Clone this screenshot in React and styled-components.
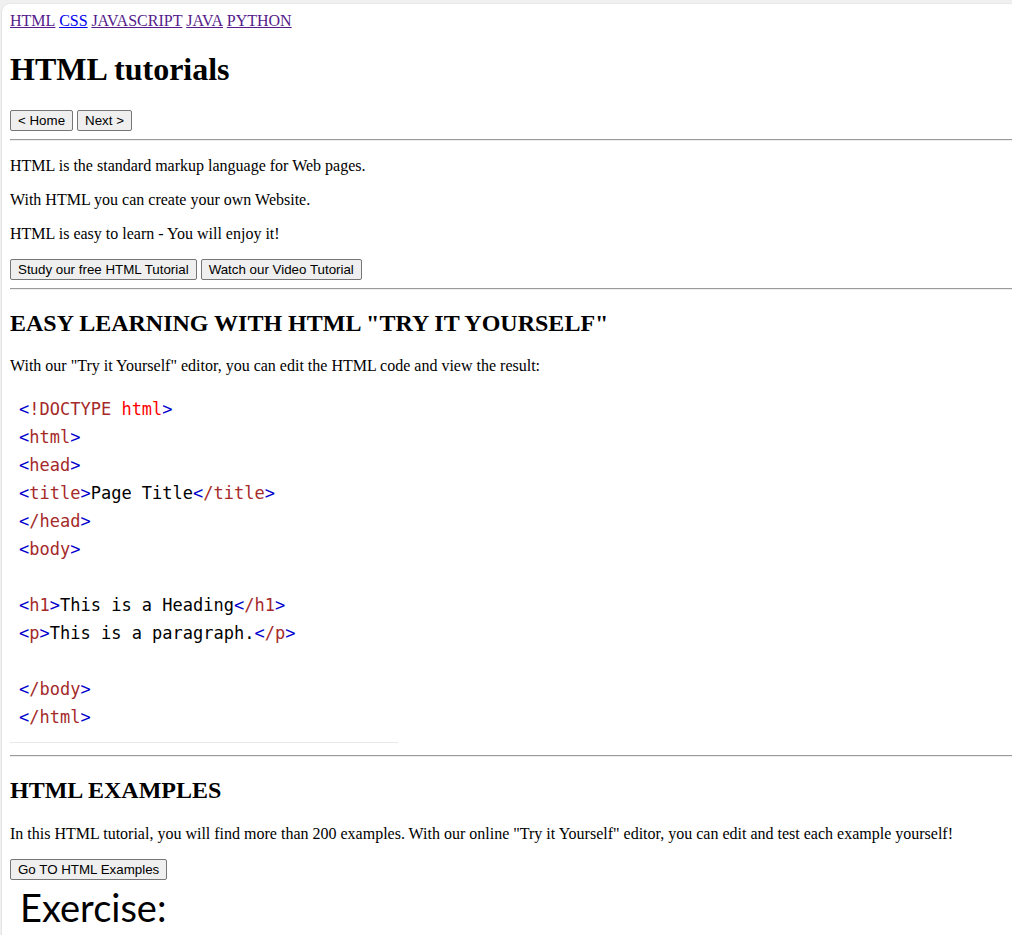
import React from "react";
import styled, { createGlobalStyle } from "styled-components";

const Global = createGlobalStyle`
  html, body { margin: 0; padding: 0; }
  body {
    background: #f0f0f0;
    font-family: "Liberation Serif", "Times New Roman", serif;
    font-size: 16px;
    color: #000;
  }
`;

const Frame = styled.div`
  margin: 4px 0 0 2px;
  min-height: calc(100vh - 4px);
  box-sizing: border-box;
  background: #fff;
  border-top-left-radius: 8px;
  box-shadow: -1px 0 0 #e4e4e4, 0 -1px 0 #e8e8e8;
  padding: 8px 0 0 8px;
  overflow: hidden;
`;

const Nav = styled.nav`
  line-height: 18px;
  display: flex;
  gap: 3.8px;
`;

const NavLink = styled.a`
  color: ${(p) => (p.$visited ? "#551a8b" : "#0000ee")};
  text-decoration: underline;
`;

const Title = styled.h1`
  font-size: 32px;
  font-weight: bold;
  margin: 21.44px 0;
  line-height: 37px;
`;

const Heading = styled.h2`
  font-size: 24px;
  font-weight: bold;
  margin: 19.92px 0;
  line-height: 27.6px;
`;

const Para = styled.p`
  margin: 16px 0;
  line-height: 18px;
`;

const ButtonRow = styled.div`
  display: flex;
  gap: 4px;
  align-items: center;
`;

const Button = styled.button`
  font-family: "Liberation Sans", Arial, sans-serif;
  font-size: 13.333px;
  height: 21px;
  padding: 0 7px;
  line-height: 19px;
  color: #000;
  background: #efefef;
  border: 1px solid #767676;
  border-radius: 2px;
  cursor: pointer;
`;

const Rule = styled.hr`
  margin: 8px 0;
  border: none;
  border-top: 1px solid #9a9a9a;
  border-bottom: 1px solid #eeeeee;
  height: 0;
`;

const CodeBox = styled.div`
  width: 388px;
  box-sizing: border-box;
  padding: 4px 0 11px 9px;
  margin-bottom: 12px;
  border-bottom: 1px solid #e8e8e8;
  font-family: "DejaVu Sans Mono", "Liberation Mono", monospace;
  font-size: 17px;
  line-height: 28px;
  white-space: pre;
`;

const CodeLine = styled.div`
  height: 28px;
`;

const Br = styled.span`
  color: #0000cd;
`;
const Tag = styled.span`
  color: #a52a2a;
`;
const Attr = styled.span`
  color: #ff0000;
`;

const Exercise = styled.div`
  font-family: Lato, "Open Sans", sans-serif;
  font-size: 38px;
  line-height: 54px;
  padding-left: 10px;
`;

const Open = ({ name }) => (
  <>
    <Br>&lt;</Br>
    <Tag>{name}</Tag>
    <Br>&gt;</Br>
  </>
);
const Close = ({ name }) => (
  <>
    <Br>&lt;</Br>
    <Tag>/{name}</Tag>
    <Br>&gt;</Br>
  </>
);

export default function App() {
  return (
    <>
      <Global />
      <Frame>
        <Nav>
          <NavLink href="#" $visited>HTML</NavLink>
          <NavLink href="#">CSS</NavLink>
          <NavLink href="#" $visited>JAVASCRIPT</NavLink>
          <NavLink href="#" $visited>JAVA</NavLink>
          <NavLink href="#" $visited>PYTHON</NavLink>
        </Nav>
        <Title>HTML tutorials</Title>
        <ButtonRow>
          <Button>&lt; Home</Button>
          <Button>Next &gt;</Button>
        </ButtonRow>
        <Rule />
        <Para>HTML is the standard markup language for Web pages.</Para>
        <Para>With HTML you can create your own Website.</Para>
        <Para>HTML is easy to learn - You will enjoy it!</Para>
        <ButtonRow>
          <Button>Study our free HTML Tutorial</Button>
          <Button>Watch our Video Tutorial</Button>
        </ButtonRow>
        <Rule />
        <Heading>EASY LEARNING WITH HTML "TRY IT YOURSELF"</Heading>
        <Para>
          With our "Try it Yourself" editor, you can edit the HTML code and view the result:
        </Para>
        <CodeBox>
          <CodeLine>
            <Br>&lt;</Br>
            <Tag>!DOCTYPE</Tag> <Attr>html</Attr>
            <Br>&gt;</Br>
          </CodeLine>
          <CodeLine><Open name="html" /></CodeLine>
          <CodeLine><Open name="head" /></CodeLine>
          <CodeLine>
            <Open name="title" />Page Title<Close name="title" />
          </CodeLine>
          <CodeLine><Close name="head" /></CodeLine>
          <CodeLine><Open name="body" /></CodeLine>
          <CodeLine />
          <CodeLine>
            <Open name="h1" />This is a Heading<Close name="h1" />
          </CodeLine>
          <CodeLine>
            <Open name="p" />This is a paragraph.<Close name="p" />
          </CodeLine>
          <CodeLine />
          <CodeLine><Close name="body" /></CodeLine>
          <CodeLine><Close name="html" /></CodeLine>
        </CodeBox>
        <Rule />
        <Heading>HTML EXAMPLES</Heading>
        <Para>
          In this HTML tutorial, you will find more than 200 examples. With our online "Try it Yourself" editor, you can edit and test each example yourself!
        </Para>
        <ButtonRow>
          <Button>Go TO HTML Examples</Button>
        </ButtonRow>
        <Exercise>Exercise:</Exercise>
      </Frame>
    </>
  );
}
